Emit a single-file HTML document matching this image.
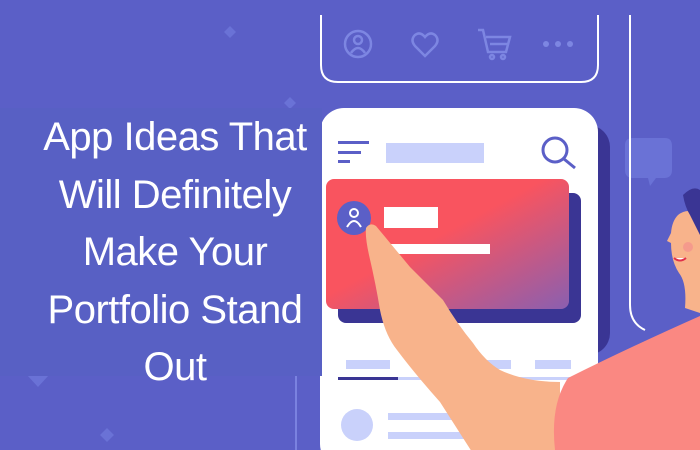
<!DOCTYPE html>
<html><head><meta charset="utf-8"><style>
html,body{margin:0;padding:0;width:700px;height:450px;overflow:hidden;background:#5b5fc7}
svg{position:absolute;left:0;top:0}
.t{position:absolute;left:0;top:108px;width:322px;height:268px;background:#5860c4;}
.tx{position:absolute;left:0;top:109px;width:350px;text-align:center;color:#fff;font-family:"Liberation Sans",sans-serif;font-size:40px;line-height:57.5px;letter-spacing:-0.5px}
</style></head><body>
<svg width="700" height="450" viewBox="0 0 700 450">
<defs>
<linearGradient id="rg" x1="0" y1="0" x2="1" y2="1">
<stop offset="0.45" stop-color="#f9545f"/><stop offset="1" stop-color="#8a5fb0"/></linearGradient>
<clipPath id="cc"><rect x="320" y="108" width="278" height="360" rx="24"/></clipPath>
</defs>
<rect x="0" y="0" width="700" height="450" fill="#5b5fc7"/>
<g fill="#6a72d6">
<path d="M230 26l6 6-6 6-6-6z"/><path d="M290 97l6 6-6 6-6-6z"/>
<path d="M27 375h22l-11 12z"/><path d="M107 428l7 7-7 7-7-7z"/>
<path d="M625 145q0-7 8-7h32q7 0 7 8v24q0 8-8 8h-8l-6 8-2-8h-15q-8 0-8-8z"/>
</g>
<path d="M296 375v75" stroke="#7a82e0" stroke-width="2" fill="none"/>
<path d="M321 15v50q0 17 17 17h243q17 0 17-17v-50" stroke="#fff" stroke-width="2" fill="none"/>
<g stroke="#7d86e2" stroke-width="2.5" fill="none">
<circle cx="358" cy="44" r="13"/><circle cx="358" cy="40" r="4"/><path d="M351 53q7-10 14 0"/>
<path d="M425 56l-10-10q-5-6 0-11q5-4 10 2q5-6 10-2q5 5 0 11z"/>
<path d="M478 30h5l5 22h18l4-15h-24M490 44h18"/><circle cx="492" cy="57" r="2"/><circle cx="503" cy="57" r="2"/>
</g>
<g fill="#7d86e2"><circle cx="546" cy="44" r="3"/><circle cx="558" cy="44" r="3"/><circle cx="570" cy="44" r="3"/></g>
<path d="M630 15v290q0 18 15 25" stroke="#fff" stroke-width="2" fill="none"/>
<rect x="300" y="125" width="310" height="230" rx="22" fill="#3a3594"/>
<rect x="320" y="108" width="278" height="360" rx="24" fill="#fff"/>
<g clip-path="url(#cc)">
<g fill="#5b5fc7"><rect x="338" y="141" width="31" height="3"/><rect x="338" y="151" width="23" height="3"/><rect x="338" y="160" width="12" height="3"/></g>
<rect x="386" y="143" width="98" height="20" fill="#c9d1fb"/>
<circle cx="555" cy="150" r="12" fill="none" stroke="#5b5fc7" stroke-width="3"/>
<path d="M564 159l11 9" stroke="#5b5fc7" stroke-width="3"/>
<rect x="338" y="193" width="243" height="130" rx="8" fill="#3a3594"/>
<rect x="326" y="179" width="243" height="130" rx="8" fill="url(#rg)"/>
<circle cx="354" cy="218" r="17" fill="#5b5fc7"/>
<circle cx="354" cy="213" r="4" fill="none" stroke="#fff" stroke-width="2"/>
<path d="M347 227q7-12 14 0" fill="none" stroke="#fff" stroke-width="2"/>
<rect x="384" y="207" width="54" height="21" fill="#fff"/>
<rect x="388" y="244" width="102" height="10" fill="#fff"/>
<g fill="#c9d1fb"><rect x="346" y="360" width="44" height="9"/><rect x="480" y="360" width="31" height="9"/><rect x="535" y="360" width="36" height="9"/>
<rect x="338" y="377" width="260" height="3"/><circle cx="357" cy="425" r="16"/><rect x="388" y="413" width="70" height="7"/><rect x="388" y="432" width="90" height="7"/></g>
<rect x="338" y="377" width="60" height="3" fill="#3a3594"/>
</g>
<path d="M700 215q-12-8-22 0q-6 6-7 18l-4 8 4 2q0 18 8 30q8 10 6 35l15 5z" fill="#f8b38b"/>
<path d="M683 195q10-10 17-5v45q-6-12-10-20q-5-8-7-20z" fill="#3a3594"/>
<circle cx="688" cy="247" r="5" fill="#f59a8c"/>
<path d="M674 258q6 5 12 0" stroke="#e0304a" stroke-width="2" fill="#fff"/>
<path d="M366 228q4-6 10-2l34 41l33 33q15 25 30 43q12 18 27 27q25 12 60 12v70h-88l-32-50q-25-28-43-52q-12-15-17-40q-4-25-11-55q-4-18-3-27z" fill="#f8b38b"/>
<path d="M568 378q60-30 132-62v134h-145q-5-45 13-72z" fill="#fa8882"/>
</svg>
<div class="t"></div>
<div class="tx">App Ideas That<br>Will Definitely<br>Make Your<br>Portfolio Stand<br>Out</div>
</body></html>
